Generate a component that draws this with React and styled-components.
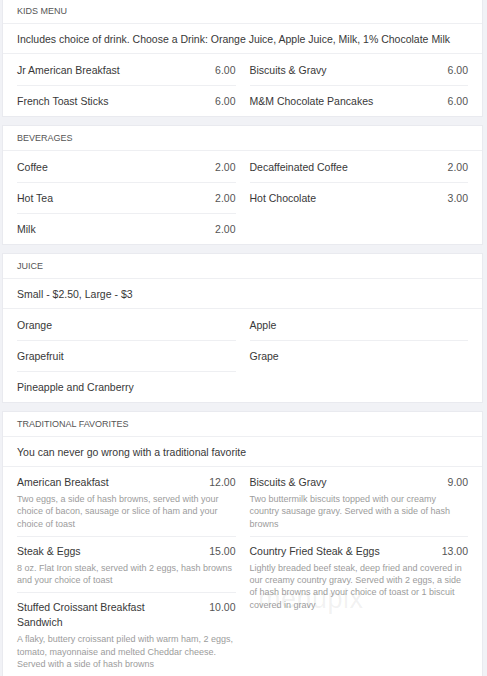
import React from "react";
import styled, { createGlobalStyle } from "styled-components";

const GlobalStyle = createGlobalStyle`
  html, body {
    margin: 0;
    padding: 0;
    background: #f1f2f6;
  }
  * { box-sizing: border-box; }
`;

const Page = styled.div`
  position: relative;
  display: flex;
  flex-direction: column;
  gap: 10px;
  padding: 0 5px 0 3px;
  margin-top: -1px;
  font-family: "Liberation Sans", Arial, sans-serif;
  color: #333;
`;

const Card = styled.section`
  background: #fff;
  box-shadow: 0 0 0 1px #e9eaef;
`;

const Header = styled.div`
  height: 25px;
  display: flex;
  align-items: center;
  padding: 0 14px;
  font-size: 9px;
  color: #555;
  text-transform: uppercase;
  border-bottom: 1px solid #eeeff2;
`;

const Note = styled.div`
  height: 30px;
  display: flex;
  align-items: center;
  padding: 0 14px;
  font-size: 10.5px;
  color: #383838;
  border-bottom: 1px solid #eeeff2;
`;

const Columns = styled.div`
  display: flex;
  gap: 14px;
  padding: 0 14px;
`;

const Column = styled.div`
  flex: 1;
  min-width: 0;
  display: flex;
  flex-direction: column;
`;

const Row = styled.div`
  height: 31px;
  display: flex;
  align-items: center;
  justify-content: space-between;
  font-size: 10.5px;
  border-top: 1px solid ${(p) => (p.$first ? "transparent" : "#eeeff2")};
`;

const Name = styled.span`
  color: #383838;
`;

const Price = styled.span`
  color: #555;
`;

const Dish = styled.div`
  padding: 7px 0 6px;
  border-top: 1px solid ${(p) => (p.$first ? "transparent" : "#eeeff2")};
`;

const DishTop = styled.div`
  display: flex;
  justify-content: space-between;
  align-items: flex-start;
  font-size: 10.5px;
  line-height: 15px;
`;

const DishName = styled.span`
  color: #383838;
  max-width: 72%;
`;

const DishDesc = styled.div`
  margin-top: 3px;
  font-size: 9px;
  line-height: 12.3px;
  color: #9c9c9c;
`;

const Watermark = styled.div`
  position: absolute;
  left: 258px;
  top: 585px;
  font-family: "Liberation Sans", Arial, sans-serif;
  font-size: 27px;
  font-weight: 300;
  color: rgba(120, 120, 120, 0.1);
  letter-spacing: 0.5px;
  pointer-events: none;
`;

const SimpleColumn = ({ items }) => (
  <Column>
    {items.map(([name, price], i) => (
      <Row key={name} $first={i === 0}>
        <Name>{name}</Name>
        {price && <Price>{price}</Price>}
      </Row>
    ))}
  </Column>
);

const DishColumn = ({ items }) => (
  <Column>
    {items.map((d, i) => (
      <Dish key={d.name} $first={i === 0}>
        <DishTop>
          <DishName>{d.name}</DishName>
          <Price>{d.price}</Price>
        </DishTop>
        <DishDesc>{d.desc}</DishDesc>
      </Dish>
    ))}
  </Column>
);

const tradLeft = [
  {
    name: "American Breakfast",
    price: "12.00",
    desc: "Two eggs, a side of hash browns, served with your choice of bacon, sausage or slice of ham and your choice of toast",
  },
  {
    name: "Steak & Eggs",
    price: "15.00",
    desc: "8 oz. Flat Iron steak, served with 2 eggs, hash browns and your choice of toast",
  },
  {
    name: "Stuffed Croissant Breakfast Sandwich",
    price: "10.00",
    desc: "A flaky, buttery croissant piled with warm ham, 2 eggs, tomato, mayonnaise and melted Cheddar cheese. Served with a side of hash browns",
  },
];

const tradRight = [
  {
    name: "Biscuits & Gravy",
    price: "9.00",
    desc: "Two buttermilk biscuits topped with our creamy country sausage gravy. Served with a side of hash browns",
  },
  {
    name: "Country Fried Steak & Eggs",
    price: "13.00",
    desc: "Lightly breaded beef steak, deep fried and covered in our creamy country gravy. Served with 2 eggs, a side of hash browns and your choice of toast or 1 biscuit covered in gravy",
  },
];

export default function App() {
  return (
    <>
      <GlobalStyle />
      <Page>
        <Card>
          <Header>Kids Menu</Header>
          <Note>
            Includes choice of drink. Choose a Drink: Orange Juice, Apple Juice, Milk, 1% Chocolate Milk
          </Note>
          <Columns>
            <SimpleColumn
              items={[
                ["Jr American Breakfast", "6.00"],
                ["French Toast Sticks", "6.00"],
              ]}
            />
            <SimpleColumn
              items={[
                ["Biscuits & Gravy", "6.00"],
                ["M&M Chocolate Pancakes", "6.00"],
              ]}
            />
          </Columns>
        </Card>

        <Card>
          <Header>Beverages</Header>
          <Columns>
            <SimpleColumn
              items={[
                ["Coffee", "2.00"],
                ["Hot Tea", "2.00"],
                ["Milk", "2.00"],
              ]}
            />
            <SimpleColumn
              items={[
                ["Decaffeinated Coffee", "2.00"],
                ["Hot Chocolate", "3.00"],
              ]}
            />
          </Columns>
        </Card>

        <Card>
          <Header>Juice</Header>
          <Note>Small - $2.50, Large - $3</Note>
          <Columns>
            <SimpleColumn
              items={[["Orange"], ["Grapefruit"], ["Pineapple and Cranberry"]]}
            />
            <SimpleColumn items={[["Apple"], ["Grape"]]} />
          </Columns>
        </Card>

        <Card>
          <Header>Traditional Favorites</Header>
          <Note>You can never go wrong with a traditional favorite</Note>
          <Columns>
            <DishColumn items={tradLeft} />
            <DishColumn items={tradRight} />
          </Columns>
        </Card>
        <Watermark>menupix</Watermark>
      </Page>
    </>
  );
}
